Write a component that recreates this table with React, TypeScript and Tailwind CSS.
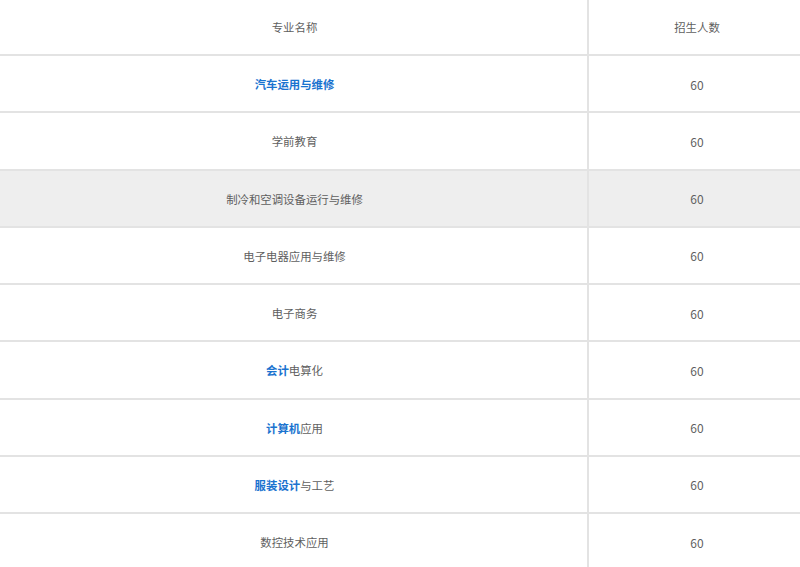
const rows: { name: React.ReactNode; count: number; hover?: boolean }[] = [
  { name: <b className="font-bold text-[#1a73cf]">汽车运用与维修</b>, count: 60 },
  { name: '学前教育', count: 60 },
  { name: '制冷和空调设备运行与维修', count: 60, hover: true },
  { name: '电子电器应用与维修', count: 60 },
  { name: '电子商务', count: 60 },
  { name: <><b className="font-bold text-[#1a73cf]">会计</b>电算化</>, count: 60 },
  { name: <><b className="font-bold text-[#1a73cf]">计算机</b>应用</>, count: 60 },
  { name: <><b className="font-bold text-[#1a73cf]">服装设计</b>与工艺</>, count: 60 },
  { name: '数控技术应用', count: 60 },
];

export default function App() {
  return (
    <div
      className="w-[800px] h-[567px] overflow-hidden bg-white text-[11.4px] text-[#5f5f5f]"
      style={{ fontFamily: '"Microsoft YaHei", "Noto Sans CJK SC", "Liberation Sans", sans-serif' }}
    >
      <table className="w-full border-collapse">
        <tbody>
          <tr className="h-[55px] border-b-2 border-[#e3e3e3]">
            <td className="w-[588px] text-center pl-[2px] pt-[2px] border-r-2 border-[#e3e3e3]">专业名称</td>
            <td className="text-center pl-[5px] pt-[2px]">招生人数</td>
          </tr>
          {rows.map((r, i) => (
            <tr key={i} className={`h-[57.25px] border-b-2 border-[#e3e3e3] ${r.hover ? 'bg-[#eeeeee]' : ''}`}>
              <td className="text-center pl-[2px] pt-[2px] border-r-2 border-[#e3e3e3]">{r.name}</td>
              <td className="text-center pl-[5px] pt-[2px] text-[12px]">{r.count}</td>
            </tr>
          ))}
        </tbody>
      </table>
    </div>
  );
}
